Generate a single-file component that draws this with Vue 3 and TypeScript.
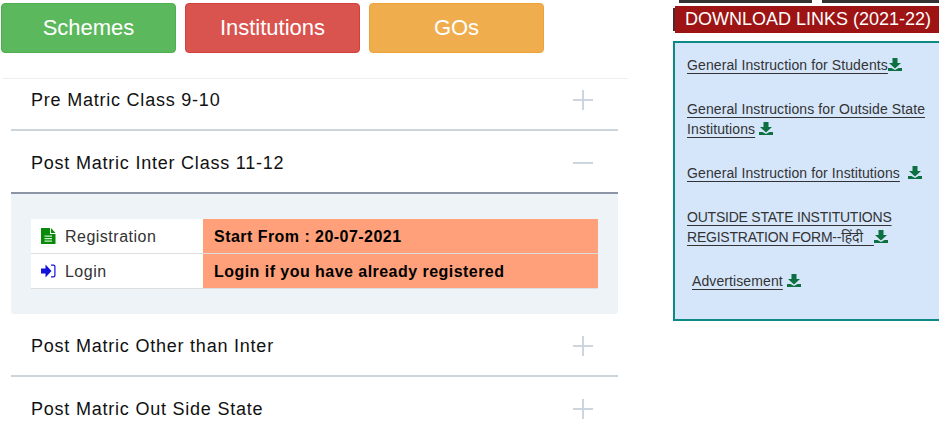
<template>
  <div class="page">
    <div class="left">
      <div class="btn-row">
        <button class="btn green">Schemes</button>
        <button class="btn red">Institutions</button>
        <button class="btn orange">GOs</button>
      </div>
      <hr class="sep" />
      <div class="accordion">
        <div v-for="item in items" :key="item.title" class="acc-item">
          <div class="acc-head" :class="{ open: item.open }">
            <span class="acc-title">{{ item.title }}</span>
            <svg class="acc-icon" width="20" height="20" viewBox="0 0 20 20">
              <rect x="0" y="9" width="20" height="2" fill="#cdd6df" />
              <rect v-if="!item.open" x="9" y="0" width="2" height="20" fill="#cdd6df" />
            </svg>
          </div>
          <div v-if="item.open" class="acc-panel">
            <table class="reg-table">
              <tbody>
                <tr>
                  <td class="name">
                    <svg class="row-icon" width="15" height="16" viewBox="0 0 15 16">
                      <path d="M0 0h9v6h5.500v10H0z" fill="#0a8a0a" />
                      <path d="M10 0l4.500 5H10z" fill="#0a8a0a" />
                      <path d="M3.500 7.500h7.500v1.300H3.500zM3.500 10h7.500v1.300H3.500zM3.500 12.500h7.500v1.300H3.500z" fill="#c8eec8" />
                    </svg>
                    Registration
                  </td>
                  <td class="note">Start From : 20-07-2021</td>
                </tr>
                <tr>
                  <td class="name">
                    <svg class="row-icon" width="15" height="16" viewBox="0 0 15 16">
                      <path d="M0 5.500h4.500V1.500L10.500 8l-6 6.500v-4H0z" fill="#1212d8" />
                      <path d="M10 1.500h2.500a2 2 0 0 1 2 2v9a2 2 0 0 1-2 2H10v-1.200h2.300a1 1 0 0 0 1-1V3.700a1 1 0 0 0-1-1H10z" fill="#1212d8" />
                    </svg>
                    Login
                  </td>
                  <td class="note">Login if you have already registered</td>
                </tr>
              </tbody>
            </table>
          </div>
        </div>
      </div>
    </div>

    <div class="right">
      <div class="top-bars">
        <span class="bar one"></span>
        <span class="bar two"></span>
      </div>
      <div class="dl-title">DOWNLOAD LINKS (2021-22)</div>
      <div class="dl-box">
        <p v-for="link in links" :key="link.text" class="dl-link" :class="link.cls">
          <a>{{ link.text }}<svg v-if="link.iconInLink" class="dl-icon" width="14" height="13" viewBox="0 0 14 13">
            <path d="M4.500 0h5v5h3.500L7 10.500 1 5h3.500z" fill="#0c7040" />
            <path d="M0 10h3.500L7 12l3.500-2H14v3H0z" fill="#0c7040" />
          </svg></a><template v-if="!link.iconInLink"><span v-if="link.gap">&nbsp;</span><svg class="dl-icon" width="14" height="13" viewBox="0 0 14 13">
            <path d="M4.500 0h5v5h3.500L7 10.500 1 5h3.500z" fill="#0c7040" />
            <path d="M0 10h3.500L7 12l3.500-2H14v3H0z" fill="#0c7040" />
          </svg></template>
        </p>
      </div>
    </div>
  </div>
</template>

<script setup lang="ts">
interface DownloadLink {
  text: string;
  gap: boolean;
  cls: string;
  iconInLink?: boolean;
}

const items = [
  { title: 'Pre Matric Class 9-10', open: false },
  { title: 'Post Matric Inter Class 11-12', open: true },
  { title: 'Post Matric Other than Inter', open: false },
  { title: 'Post Matric Out Side State', open: false },
];

const links: DownloadLink[] = [
  { text: 'General Instruction for Students', gap: false, cls: '' },
  { text: 'General Instructions for Outside State Institutions', gap: true, cls: '' },
  { text: 'General Instruction for Institutions', gap: true, cls: 'wide' },
  { text: 'OUTSIDE STATE INSTITUTIONS REGISTRATION FORM--हिंदी\u00a0\u00a0\u00a0', gap: true, cls: 'caps', iconInLink: true },
  { text: 'Advertisement', gap: true, cls: 'indent' },
];
</script>

<style>
html,
body {
  margin: 0;
  overflow: hidden;
  background: #fff;
}
</style>

<style scoped>
.page {
  display: flex;
  height: 428px;
  width: 939px;
  overflow: hidden;
  font-family: 'Liberation Sans', 'Noto Sans', sans-serif;
}

.left {
  width: 628px;
  padding: 3px 0 0 1px;
  box-sizing: border-box;
  flex-shrink: 0;
}

.btn-row {
  display: flex;
  gap: 9px;
}

.btn {
  width: 175px;
  height: 50px;
  border-radius: 4px;
  border: 1px solid transparent;
  color: #fff;
  font-family: inherit;
  font-size: 22px;
  padding: 0;
}

.green {
  background: #5cb85c;
  border-color: #4cae4c;
}

.red {
  background: #d9534f;
  border-color: #d43f3a;
}

.orange {
  background: #f0ad4e;
  border-color: #eea236;
}

.sep {
  margin: 25px 0 0 2px;
  border: none;
  border-top: 1px solid #eeeeee;
}

.accordion {
  margin-left: 10px;
  width: 607px;
}

.acc-head {
  display: flex;
  align-items: center;
  justify-content: space-between;
  padding: 4px 25px 0 20px;
  height: 57px;
  border-bottom: 2px solid #ccd5dc;
}

.acc-item:first-child .acc-head {
  height: 42px;
  padding-top: 0;
  padding-bottom: 8px;
}

.acc-head.open {
  border-bottom-color: #8b95a5;
}

.acc-title {
  font-size: 18px;
  letter-spacing: 0.78px;
  color: #111;
}

.acc-icon {
  margin-top: -2px;
}

.acc-item:first-child .acc-icon {
  margin-top: 0;
}

.acc-panel {
  background: #eef3f8;
  padding: 25px 20px;
  border-radius: 0 0 3px 3px;
}

.reg-table {
  width: 100%;
  border-collapse: collapse;
  background: #fff;
}

.reg-table td {
  height: 32px;
  padding: 2px 0 0;
  border-bottom: 1px solid #ddd;
}

.name {
  width: 172px;
  font-size: 16px;
  letter-spacing: 0.5px;
  color: #333;
  padding-left: 10px !important;
  box-sizing: border-box;
}

.row-icon {
  vertical-align: -2px;
  margin-right: 4px;
}

.note {
  background: #ffa07a;
  font-size: 16px;
  font-weight: bold;
  color: #000;
  padding-left: 11px !important;
  letter-spacing: 0.46px;
}

.right {
  margin-left: 45px;
  width: 272px;
  flex-shrink: 0;
}

.top-bars {
  display: flex;
  gap: 10px;
  padding-left: 6px;
  height: 3px;
}

.bar {
  display: block;
  height: 3px;
  background: #333;
}

.one {
  width: 133px;
}

.two {
  flex: 1;
}

.dl-title {
  position: relative;
  margin: 3px 0 0 2px;
  height: 27px;
  line-height: 27px;
  background: #9e1414;
  padding-left: 10px;
  color: #fff;
  font-size: 18px;
  white-space: nowrap;
}

.dl-title::before {
  content: '';
  position: absolute;
  left: -2px;
  top: 2px;
  bottom: 2px;
  width: 2px;
  background: #4a2a2a;
}

.dl-box {
  margin-top: 8px;
  height: 280px;
  box-sizing: border-box;
  border: 2px solid #0d8a85;
  background: #d5e6fb;
  padding: 12px 10px 0 12px;
}

.dl-link {
  margin: 0 0 24px;
  font-size: 14px;
  letter-spacing: 0.1px;
  line-height: 20px;
  color: #333;
}

.dl-link a {
  text-decoration: underline;
  text-underline-offset: 3px;
}

.wide a {
  margin-right: 4px;
}

.caps {
  width: 225px;
  letter-spacing: -0.22px;
}

.indent {
  padding-left: 5px;
}

.dl-icon {
  vertical-align: -1px;
  margin-left: 0;
}
</style>
